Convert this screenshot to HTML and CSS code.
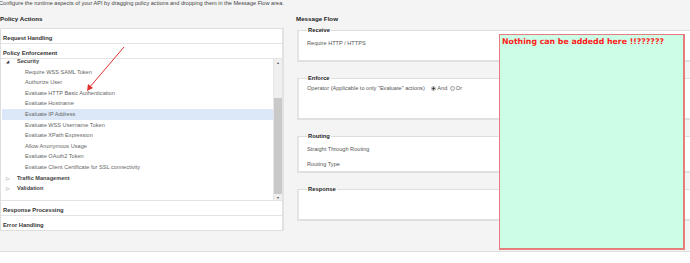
FILE: index.html
```html
<!DOCTYPE html>
<html lang="en">
<head>
  <meta charset="UTF-8" />
  <title>Policy Actions</title>
  <link rel="stylesheet" href="styles.css">
</head>
<body>
  <div class="page">
    <p class="intro">Configure the runtime aspects of your API by dragging policy actions and dropping them in the Message Flow area.</p>
    <div class="columns">
      <div class="actions">
        <h3>Policy Actions</h3>
        <div class="panel">
          <div class="group">Request Handling</div>
          <div class="group">Policy Enforcement</div>
          <div class="tree-wrap">
            <ul class="tree">
              <li class="node open"><span class="arrow">&#9698;</span>Security</li>
              <li class="leaf">Require WSS SAML Token</li>
              <li class="leaf">Authorize User</li>
              <li class="leaf">Evaluate HTTP Basic Authentication</li>
              <li class="leaf">Evaluate Hostname</li>
              <li class="leaf selected">Evaluate IP Address</li>
              <li class="leaf">Evaluate WSS Username Token</li>
              <li class="leaf">Evaluate XPath Expression</li>
              <li class="leaf">Allow Anonymous Usage</li>
              <li class="leaf">Evaluate OAuth2 Token</li>
              <li class="leaf">Evaluate Client Certificate for SSL connectivity</li>
              <li class="node"><span class="arrow closed">&#9655;</span>Traffic Management</li>
              <li class="node"><span class="arrow closed">&#9655;</span>Validation</li>
            </ul>
            <div class="scrollbar">
              <span class="scroll-btn">&#9650;</span>
              <div class="scroll-track"><div class="scroll-thumb"></div></div>
              <span class="scroll-btn">&#9660;</span>
            </div>
          </div>
          <div class="group">Response Processing</div>
          <div class="group last">Error Handling</div>
        </div>
      </div>

      <div class="flow">
        <h3>Message Flow</h3>
        <fieldset class="stage receive">
          <legend>Receive</legend>
          <div class="line">Require HTTP / HTTPS</div>
        </fieldset>
        <fieldset class="stage enforce">
          <legend>Enforce</legend>
          <div class="line">Operator (Applicable to only "Evaluate" actions)
            <span class="radios">
              <span class="radio checked"></span>And
              <span class="radio"></span>Or
            </span>
          </div>
        </fieldset>
        <fieldset class="stage routing">
          <legend>Routing</legend>
          <div class="line">Straight Through Routing</div>
          <div class="line">Routing Type</div>
        </fieldset>
        <fieldset class="stage response">
          <legend>Response</legend>
        </fieldset>
      </div>
    </div>

    <div class="note">Nothing can be addedd here !!??????</div>

    <svg class="pointer" width="140" height="100" viewBox="0 0 140 100">
      <line x1="124" y1="47" x2="89" y2="88" stroke="#e03030" stroke-width="1"/>
      <polygon points="87,91 88,84 93,88" fill="#e03030"/>
    </svg>
  </div>
</body>
</html>
```

FILE: styles.css
```css
* {
  box-sizing: border-box;
}

body {
  margin: 0;
  background: #fff;
  font-family: 'Liberation Sans', Arial, sans-serif;
  font-size: 5.6px;
  color: #555;
  overflow: hidden;
}

.page {
  position: relative;
  height: 252px;
  background: #f4f4f4;
  border-bottom: 1px solid #dcdcdc;
  overflow: hidden;
}

.intro {
  margin: 0 0 0 -1px;
  height: 8px;
  line-height: 7px;
  color: #444;
  white-space: nowrap;
}

.columns {
  display: flex;
  gap: 12px;
}

h3 {
  margin: 0;
  height: 20px;
  line-height: 22px;
  font-size: 6.2px;
  font-weight: bold;
  color: #222;
}

.actions {
  width: 284px;
  flex: none;
}

.panel {
  background: #fff;
  border: 1px solid #dedede;
  border-right: 2px solid #e2e2e2;
  height: 203px;
}

.group {
  height: 15px;
  padding: 3px 0 0 2px;
  line-height: 12px;
  font-size: 5.8px;
  font-weight: bold;
  color: #333;
  border-bottom: 1px solid #e4e4e4;
}

.group.last {
  border-bottom: none;
}

.tree-wrap {
  display: flex;
  height: 142px;
  border-bottom: 1px solid #e4e4e4;
  overflow: hidden;
}

.tree {
  flex: 1;
  list-style: none;
  margin: -3px 0 0 0;
  padding: 0 0 0 1px;
}

.tree li {
  height: 10.6px;
  line-height: 10.6px;
  white-space: nowrap;
}

.node {
  font-weight: bold;
  color: #444;
  padding-left: 4px;
}

.arrow {
  display: inline-block;
  width: 11px;
  font-size: 4px;
  color: #333;
}

.arrow.closed {
  color: #bbb;
  font-size: 4.5px;
}

.leaf {
  padding-left: 23px;
  color: #666;
}

.leaf.selected {
  background: #dce8f7;
}

.scrollbar {
  width: 9px;
  flex: none;
  display: flex;
  flex-direction: column;
  background: #efefef;
  border-left: 1px solid #e6e6e6;
}

.scroll-btn {
  height: 9px;
  line-height: 9px;
  text-align: center;
  font-size: 3.5px;
  color: #555;
}

.scroll-track {
  flex: 1;
  padding-top: 30px;
}

.scroll-thumb {
  height: 96px;
  background: #c9c9c9;
}

.flow {
  flex: none;
  width: 420px;
}

.flow h3 {
  height: 19px;
}

.stage {
  margin: 0 0 13px 1px;
  padding: 3px 0 0 8px;
  border: 1px solid #dedede;
  border-left: 2px solid #e4e4e4;
  border-bottom: 2px solid #e0e0e0;
  background: #fff;
}

.stage legend {
  padding: 0 1px;
  font-size: 5.8px;
  font-weight: bold;
  color: #222;
  line-height: 6px;
}

.stage .line {
  height: 15px;
  line-height: 15px;
  color: #555;
}

.receive {
  height: 35px;
}

.enforce {
  height: 45px;
}

.enforce .line {
  margin-top: -3px;
}

.routing {
  height: 40px;
}

.response {
  height: 35px;
}

.radios {
  margin-left: 4px;
}

.radio {
  display: inline-block;
  width: 5px;
  height: 5px;
  border-radius: 50%;
  border: 1px solid #aaa;
  background: #eee;
  vertical-align: -1px;
  margin: 0 1px 0 1px;
}

.radio.checked {
  background: radial-gradient(circle, #333 45%, #e8e8e8 55%);
}

.note {
  position: absolute;
  left: 499px;
  top: 34px;
  width: 186px;
  height: 216px;
  padding: 1px 2px;
  background: #ccfde6;
  border: 1px solid #e77c7c;
  border-right-width: 2px;
  border-bottom-width: 2px;
  font-family: 'DejaVu Sans', Verdana, sans-serif;
  font-size: 7.8px;
  font-weight: bold;
  color: #ff1a1a;
  line-height: 11px;
}

.pointer {
  position: absolute;
  left: 0;
  top: 0;
}
```
